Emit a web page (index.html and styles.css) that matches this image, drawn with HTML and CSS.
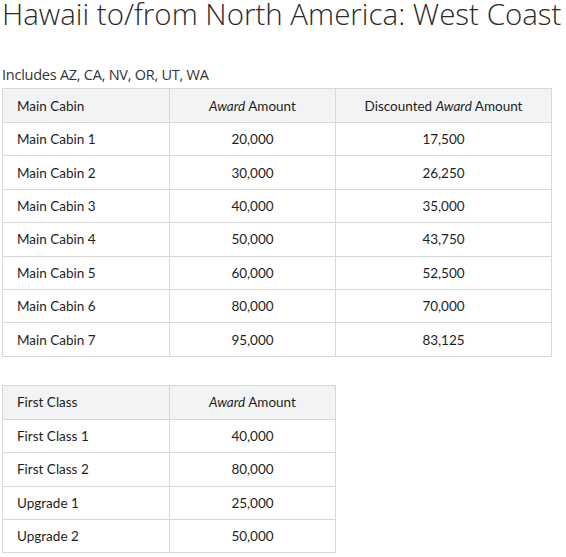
FILE: index.html
```html
<!DOCTYPE html>
<html>
<head>
<meta charset="utf-8">
<link rel="stylesheet" href="styles.css">
</head>
<body>
<h1 class="title">Hawaii to/from North America: West Coast</h1>
<p class="subtitle">Includes AZ, CA, NV, OR, UT, WA</p>
<table class="awards awards-main">
  <thead>
    <tr><th class="c1">Main Cabin</th><th class="c2"><em>Award</em> Amount</th><th class="c3">Discounted <em>Award</em> Amount</th></tr>
  </thead>
  <tbody>
    <tr><td>Main Cabin 1</td><td>20,000</td><td>17,500</td></tr>
    <tr><td>Main Cabin 2</td><td>30,000</td><td>26,250</td></tr>
    <tr><td>Main Cabin 3</td><td>40,000</td><td>35,000</td></tr>
    <tr><td>Main Cabin 4</td><td>50,000</td><td>43,750</td></tr>
    <tr><td>Main Cabin 5</td><td>60,000</td><td>52,500</td></tr>
    <tr><td>Main Cabin 6</td><td>80,000</td><td>70,000</td></tr>
    <tr><td>Main Cabin 7</td><td>95,000</td><td>83,125</td></tr>
  </tbody>
</table>
<table class="awards awards-first">
  <thead>
    <tr><th class="c1">First Class</th><th class="c2"><em>Award</em> Amount</th></tr>
  </thead>
  <tbody>
    <tr><td>First Class 1</td><td>40,000</td></tr>
    <tr><td>First Class 2</td><td>80,000</td></tr>
    <tr><td>Upgrade 1</td><td>25,000</td></tr>
    <tr><td>Upgrade 2</td><td>50,000</td></tr>
  </tbody>
</table>
</body>
</html>
```
FILE: styles.css
```css
html, body {
  margin: 0;
  padding: 0;
  background: #ffffff;
}
body {
  padding-left: 2px;
  color: #222222;
  font-family: "Open Sans", "Liberation Sans", sans-serif;
}
.title {
  margin: 0;
  font-family: "Open Sans", sans-serif;
  font-weight: 300;
  font-size: 29.5px;
  line-height: 28px;
  color: #2a2a2a;
  white-space: nowrap;
}
.subtitle {
  margin: 36px 0 0 0;
  font-family: "Open Sans", sans-serif;
  font-weight: 400;
  font-size: 14.5px;
  line-height: 22px;
  color: #333333;
  letter-spacing: -0.25px;
}
.awards {
  border-collapse: collapse;
  font-family: Lato, "Noto Sans", sans-serif;
  font-size: 13.5px;
  color: #1e1e1e;
  table-layout: fixed;
}
.awards-main {
  margin-top: 2px;
  width: 550px;
}
.awards-first {
  margin-top: 28px;
  width: 334px;
}
.awards th,
.awards td {
  box-sizing: border-box;
  border: 1px solid #d8d8d8;
  height: 33.4px;
  padding: 0 14px;
  text-align: center;
  font-weight: 400;
  white-space: nowrap;
}
.awards th {
  background: #f2f3f4;
  height: 34px;
}
.awards th.c1,
.awards td:first-child {
  text-align: left;
}
.awards-main .c1 { width: 167px; }
.awards-main .c2 { width: 166px; }
.awards-first .c1 { width: 167px; }
.awards em {
  font-style: italic;
}
```
